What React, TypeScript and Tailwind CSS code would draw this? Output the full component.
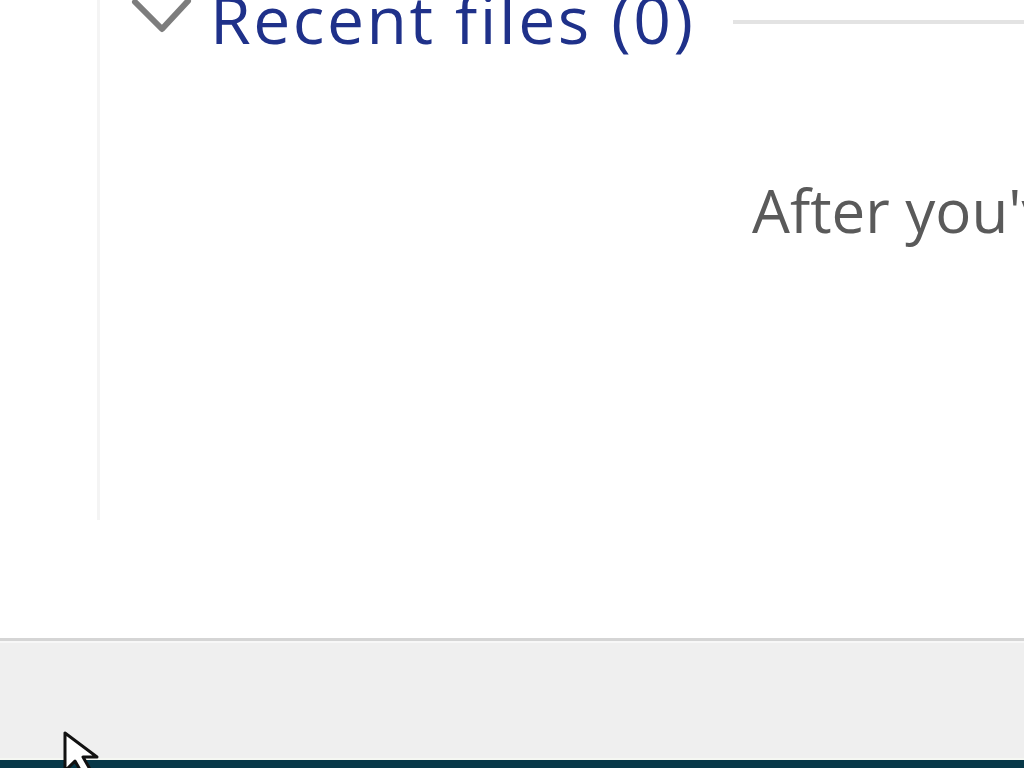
import React from "react";

function Chevron() {
  return (
    <svg width="62" height="40" viewBox="0 0 62 40" className="shrink-0">
      <path d="M4 5 L31 32 L57 4" fill="none" stroke="#7d7d7d" strokeWidth="6" strokeLinecap="round" strokeLinejoin="round" />
    </svg>
  );
}

function Cursor() {
  return (
    <svg width="40" height="44" viewBox="0 0 40 44" className="absolute left-[63px] top-[731px]">
      <path d="M2 2 L2 40 L12 30 L20 44 L28 40 L20 26 L34 26 Z" fill="#ffffff" stroke="#111111" strokeWidth="3" strokeLinejoin="round" />
    </svg>
  );
}

export default function App() {
  return (
    <div className="relative w-[1024px] h-[768px] overflow-hidden bg-white flex flex-col font-['Open_Sans','Noto_Sans',sans-serif]">
      {/* content */}
      <div className="h-[638px] shrink-0">
        <div className="ml-[97px] h-[520px] border-l-[3px] border-[#f4f4f4] flex flex-col">
          <div className="flex items-start -mt-[15px] h-[66px]">
            <div className="ml-[31px] mt-[12px]">
              <Chevron />
            </div>
            <span className="ml-[17px] text-[66px] leading-none text-[#1f318a] whitespace-nowrap tracking-[2.5px]">
              Recent files (0)
            </span>
            <div className="flex-1 ml-[38px] mt-[35px] h-[4px] bg-[#e3e3e3]" />
          </div>
          <div className="mt-[129px] ml-[652px] text-[60px] leading-none text-[#5a5a5a] whitespace-nowrap">
            After you've opened some files
          </div>
        </div>
      </div>
      {/* status bar */}
      <div className="h-[120px] shrink-0 border-t-[3px] border-[#d5d5d5] bg-[#efefef]">
        <div className="h-[2px] bg-[#f7f7f7]" />
      </div>
      <div className="h-[2px] bg-[#f5f7f2]" />
      <div className="flex-1 bg-[#073848]" />
      <Cursor />
    </div>
  );
}
